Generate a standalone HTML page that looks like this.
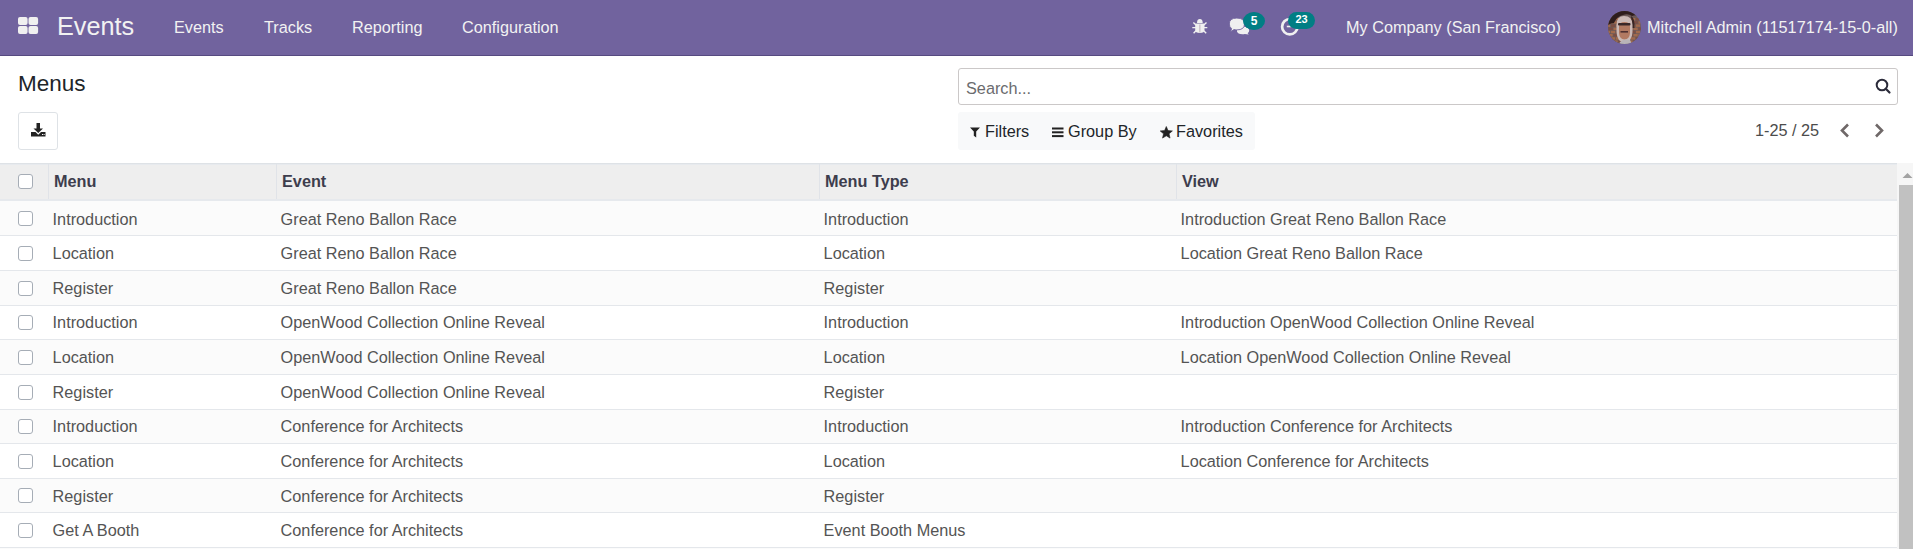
<!DOCTYPE html>
<html><head><meta charset="utf-8">
<style>
*{box-sizing:border-box;margin:0;padding:0}
html,body{width:1913px;height:549px;overflow:hidden;background:#fff;font-family:"Liberation Sans",sans-serif;}
.abs{position:absolute;white-space:nowrap}
#nav{position:absolute;left:0;top:0;width:1913px;height:56px;background:#71639e;border-bottom:1px solid #564a80}
.nt{position:absolute;color:#f2f2f2;font-size:16.25px;line-height:20px;top:17px;white-space:nowrap}
.brand{font-size:25.25px;line-height:30px;top:10.5px}
.badge{position:absolute;background:#017e84;color:#fff;font-weight:bold;font-size:11.5px;text-align:center;border-radius:9px}
.t{color:#4c4c4c;font-size:16.25px}
#sb{position:absolute;left:958px;top:68px;width:940px;height:37px;border:1px solid #cbc8c8;border-radius:3px}
#fb{position:absolute;left:958px;top:112px;width:297px;height:38px;background:#f8f9fa;border-radius:3px}
#dl{position:absolute;left:18px;top:112px;width:40px;height:38px;border:1px solid #dee2e6;border-radius:3px}
#tbl{position:absolute;left:0;top:163px;width:1897px}
.hdr{position:relative;height:38px;background:#eeeeee;border-top:1px solid #dee2e6;border-bottom:2px solid #e6e9ed;box-shadow:inset 0 1px 0 #e7eaee}
.r{position:absolute;left:0;width:1897px;border-bottom:1px solid #e4e7eb}
.r.odd{background:#fbfbfb}
.c{position:absolute;white-space:nowrap;color:#545454;font-size:16.25px;line-height:20px}
.cell{position:absolute;top:0;height:100%;display:flex;align-items:center;padding-top:3px;white-space:nowrap;color:#4c4c4c;font-size:16.25px}
.hdr .cell{font-weight:bold;color:#3d3d4d;padding-top:0;padding-bottom:0;margin-left:1px}
.hdr .div{position:absolute;top:0;bottom:0;width:1px;background:#e0e3e8}
.cb{position:absolute;left:18px;width:15px;height:15px;border:1px solid #a6adb6;border-radius:3px;background:#fff}
#scr{position:absolute;left:1897px;top:163px;width:16px;height:386px;background:#f6f6f6}
#thumb{position:absolute;left:1899px;top:185px;width:14px;height:364px;background:#c1c1c1}
</style></head>
<body>
<div id="nav">
  <svg class="abs" style="left:18px;top:17px" width="21" height="18" viewBox="0 0 21 18">
    <rect x="0" y="0" width="9.6" height="8.1" rx="2" fill="#f0f0f0"/>
    <rect x="10.5" y="0" width="9.6" height="8.1" rx="2" fill="#f0f0f0"/>
    <rect x="0" y="9" width="9.6" height="8.1" rx="2" fill="#f0f0f0"/>
    <rect x="10.5" y="9" width="9.6" height="8.1" rx="2" fill="#f0f0f0"/>
  </svg>
  <div class="nt brand" style="left:57px">Events</div>
  <div class="nt" style="left:174px">Events</div>
  <div class="nt" style="left:264px">Tracks</div>
  <div class="nt" style="left:352px">Reporting</div>
  <div class="nt" style="left:462px">Configuration</div>

  <!-- bug -->
  <svg class="abs" style="left:1188px;top:15px" width="24" height="23" viewBox="0 0 24 23">
    <path d="M9 8.1 Q9 4.1 11.85 4.1 Q14.7 4.1 14.7 8.1 Z" fill="#f0f0f0"/>
    <path d="M7.2 8.7 H16.5 V14.8 Q16.5 18 11.85 18 Q7.2 18 7.2 14.8 Z" fill="#f0f0f0"/>
    <path d="M5.4 7.4 L8 10 M18.5 7.4 L15.8 10 M4.3 12.6 H8 M19.3 12.6 H15.7 M5.6 18.3 L8.2 15.6 M18.2 18.3 L15.5 15.6" stroke="#f0f0f0" stroke-width="1.4"/>
    <rect x="7.2" y="8.1" width="9.3" height="0.7" fill="#b8b4c8"/>
    <rect x="11.5" y="9.5" width="0.8" height="8" fill="#b09cb0"/>
  </svg>
  <!-- comments -->
  <svg class="abs" style="left:1225px;top:8px" width="26" height="30" viewBox="0 0 26 30">
    <path d="M12 21 Q13 18.5 18 18.5 Q24.2 19 24.2 22.5 Q24.2 24.3 22.6 25.2 L23.8 26.6 L19.8 25.9 Q18.9 26.2 17.5 26.2 Q12.5 26 12 23.5 Z" fill="#f0f0f0"/>
    <path d="M4.3 16 Q4.3 10.1 11.8 10.1 Q19.5 10.1 19.5 16 Q19.5 21.9 11.8 21.9 Q10.3 21.9 9 21.6 L5.6 23.8 L6.6 20.6 Q4.3 18.9 4.3 16 Z" fill="#f0f0f0" stroke="#71639e" stroke-width="0.9"/>
  </svg>
  <div class="badge" style="left:1243px;top:11.5px;width:22px;height:18.5px;line-height:19.5px;font-size:12px;border-radius:50%">5</div>
  <!-- clock -->
  <svg class="abs" style="left:1279.6px;top:15.7px" width="20" height="20" viewBox="0 0 20 20">
    <circle cx="9.8" cy="10.7" r="7.7" fill="none" stroke="#f0f0f0" stroke-width="2.7"/>
    <path d="M10.8 10.5 H6.8" fill="none" stroke="#f0f0f0" stroke-width="1.6"/>
  </svg>
  <div class="badge" style="left:1288px;top:11.7px;width:27px;height:17.3px;line-height:15px;font-size:11px">23</div>

  <div class="nt" style="left:1346px">My Company (San Francisco)</div>
  <div class="abs" style="left:1608px;top:10.5px;width:33px;height:33px;border-radius:50%;overflow:hidden"><svg style="display:block" width="33" height="33" viewBox="0 0 33 33">
    <g>
      <rect width="33" height="33" fill="#6c5a58"/>
      <rect x="-2.0" y="7.0" width="4.2" height="2.5" fill="#7d4e42"/><rect x="3.0" y="7.0" width="4.2" height="2.5" fill="#a26a4c"/><rect x="8.0" y="7.0" width="4.2" height="2.5" fill="#a26a4c"/><rect x="13.0" y="7.0" width="4.2" height="2.5" fill="#7d4e42"/><rect x="18.0" y="7.0" width="4.2" height="2.5" fill="#a26a4c"/><rect x="23.0" y="7.0" width="4.2" height="2.5" fill="#a26a4c"/><rect x="28.0" y="7.0" width="4.2" height="2.5" fill="#7d4e42"/><rect x="0.5" y="10.2" width="4.2" height="2.5" fill="#a26a4c"/><rect x="5.5" y="10.2" width="4.2" height="2.5" fill="#a26a4c"/><rect x="10.5" y="10.2" width="4.2" height="2.5" fill="#7d4e42"/><rect x="15.5" y="10.2" width="4.2" height="2.5" fill="#a26a4c"/><rect x="20.5" y="10.2" width="4.2" height="2.5" fill="#a26a4c"/><rect x="25.5" y="10.2" width="4.2" height="2.5" fill="#7d4e42"/><rect x="30.5" y="10.2" width="4.2" height="2.5" fill="#a26a4c"/><rect x="-2.0" y="13.4" width="4.2" height="2.5" fill="#a26a4c"/><rect x="3.0" y="13.4" width="4.2" height="2.5" fill="#7d4e42"/><rect x="8.0" y="13.4" width="4.2" height="2.5" fill="#a26a4c"/><rect x="13.0" y="13.4" width="4.2" height="2.5" fill="#a26a4c"/><rect x="18.0" y="13.4" width="4.2" height="2.5" fill="#7d4e42"/><rect x="23.0" y="13.4" width="4.2" height="2.5" fill="#a26a4c"/><rect x="28.0" y="13.4" width="4.2" height="2.5" fill="#a26a4c"/><rect x="0.5" y="16.6" width="4.2" height="2.5" fill="#7d4e42"/><rect x="5.5" y="16.6" width="4.2" height="2.5" fill="#a26a4c"/><rect x="10.5" y="16.6" width="4.2" height="2.5" fill="#a26a4c"/><rect x="15.5" y="16.6" width="4.2" height="2.5" fill="#7d4e42"/><rect x="20.5" y="16.6" width="4.2" height="2.5" fill="#a26a4c"/><rect x="25.5" y="16.6" width="4.2" height="2.5" fill="#a26a4c"/><rect x="30.5" y="16.6" width="4.2" height="2.5" fill="#7d4e42"/><rect x="-2.0" y="19.8" width="4.2" height="2.5" fill="#a26a4c"/><rect x="3.0" y="19.8" width="4.2" height="2.5" fill="#a26a4c"/><rect x="8.0" y="19.8" width="4.2" height="2.5" fill="#7d4e42"/><rect x="13.0" y="19.8" width="4.2" height="2.5" fill="#a26a4c"/><rect x="18.0" y="19.8" width="4.2" height="2.5" fill="#a26a4c"/><rect x="23.0" y="19.8" width="4.2" height="2.5" fill="#7d4e42"/><rect x="28.0" y="19.8" width="4.2" height="2.5" fill="#a26a4c"/><rect x="0.5" y="23.0" width="4.2" height="2.5" fill="#a26a4c"/><rect x="5.5" y="23.0" width="4.2" height="2.5" fill="#7d4e42"/><rect x="10.5" y="23.0" width="4.2" height="2.5" fill="#a26a4c"/><rect x="15.5" y="23.0" width="4.2" height="2.5" fill="#a26a4c"/><rect x="20.5" y="23.0" width="4.2" height="2.5" fill="#7d4e42"/><rect x="25.5" y="23.0" width="4.2" height="2.5" fill="#a26a4c"/><rect x="30.5" y="23.0" width="4.2" height="2.5" fill="#a26a4c"/><rect x="-2.0" y="26.2" width="4.2" height="2.5" fill="#7d4e42"/><rect x="3.0" y="26.2" width="4.2" height="2.5" fill="#a26a4c"/><rect x="8.0" y="26.2" width="4.2" height="2.5" fill="#a26a4c"/><rect x="13.0" y="26.2" width="4.2" height="2.5" fill="#7d4e42"/><rect x="18.0" y="26.2" width="4.2" height="2.5" fill="#a26a4c"/><rect x="23.0" y="26.2" width="4.2" height="2.5" fill="#a26a4c"/><rect x="28.0" y="26.2" width="4.2" height="2.5" fill="#7d4e42"/><rect x="0.5" y="29.4" width="4.2" height="2.5" fill="#a26a4c"/><rect x="5.5" y="29.4" width="4.2" height="2.5" fill="#a26a4c"/><rect x="10.5" y="29.4" width="4.2" height="2.5" fill="#7d4e42"/><rect x="15.5" y="29.4" width="4.2" height="2.5" fill="#a26a4c"/><rect x="20.5" y="29.4" width="4.2" height="2.5" fill="#a26a4c"/><rect x="25.5" y="29.4" width="4.2" height="2.5" fill="#7d4e42"/><rect x="30.5" y="29.4" width="4.2" height="2.5" fill="#a26a4c"/>
      <path d="M0 0 H33 V6 Q28 3 24 5 Q20 2 15 4 Q9 5 6 12 Q3 12 0 14 Z" fill="#2e1d1c"/>
      <path d="M23 5 Q27 7 26.5 17 L24 17 Z" fill="#3a2624"/>
      <path d="M0 22 Q4 30 12 33 H0 Z" fill="#352625"/>
      <path d="M8.5 14 Q8.5 5 16 5 Q24.5 5 24.5 14 V21 Q24 31 16.5 31.5 Q9 31 8.5 21 Z" fill="#cbbab6"/>
      <path d="M11 16 Q11 11 16.5 11 Q22 11 22 16 V22 Q21.5 28 16.5 28.5 Q11.5 28 11 22 Z" fill="#b27a62"/>
      <rect x="10" y="12" width="12.5" height="2.4" rx="1" fill="#3a2828"/>
      <rect x="12.5" y="20" width="7.5" height="1.6" fill="#4e3030"/>
      <path d="M12 31 Q16 27.5 22 29 L24 33 H11 Z" fill="#b8b4b8"/>
    </g>
  </svg></div>
  <div class="nt" style="left:1647px">Mitchell Admin (11517174-15-0-all)</div>
</div>

<!-- control panel -->
<div class="abs" style="left:18px;top:70px;font-size:22.5px;line-height:28px;color:#212529">Menus</div>
<div id="dl">
  <svg class="abs" style="left:11px;top:9px" width="17" height="17" viewBox="0 0 17 17">
    <path d="M6.5 1 H10 V6.5 H13 L8.25 11 L3.5 6.5 H6.5 Z" fill="#222"/>
    <path d="M1 10 H5.5 L8.25 12.8 L11 10 H15.5 V14.5 H1 Z" fill="#222"/>
    <rect x="12" y="12" width="1" height="1" fill="#fff"/><rect x="13.6" y="12" width="1" height="1" fill="#fff"/>
  </svg>
</div>

<div id="sb">
  <div class="abs t" style="left:7px;top:9px;color:#6b6b6e;line-height:20px">Search...</div>
  <svg class="abs" style="left:916px;top:9px" width="17" height="17" viewBox="0 0 17 17">
    <circle cx="7" cy="7" r="5.3" fill="none" stroke="#2b2b3a" stroke-width="2"/>
    <path d="M10.8 10.8 L14.5 14.5" stroke="#2b2b3a" stroke-width="2.2" stroke-linecap="round"/>
  </svg>
</div>

<div id="fb">
  <svg class="abs" style="left:12px;top:15px" width="11" height="11" viewBox="0 0 11 11">
    <path d="M0 0.5 H10 L6.2 4.6 V10.5 L3.8 8.8 V4.6 Z" fill="#222"/>
  </svg>
  <div class="abs t" style="left:27px;top:9px;line-height:20px;color:#212529">Filters</div>
  <svg class="abs" style="left:94px;top:15px" width="12" height="11" viewBox="0 0 12 11">
    <rect x="0" y="0.5" width="11.5" height="2" fill="#222"/>
    <rect x="0" y="4.3" width="11.5" height="2" fill="#222"/>
    <rect x="0" y="8.1" width="11.5" height="2" fill="#222"/>
  </svg>
  <div class="abs t" style="left:110px;top:9px;line-height:20px;color:#212529">Group By</div>
  <svg class="abs" style="left:201.5px;top:13.8px" width="13" height="14" viewBox="0 0 13 14"><path d="M6.30 0.50 L8.00 4.55 L12.39 4.92 L9.06 7.80 L10.06 12.08 L6.30 9.80 L2.54 12.08 L3.54 7.80 L0.21 4.92 L4.60 4.55 Z" fill="#222" stroke="#222" stroke-width="0.6" stroke-linejoin="round"/></svg>
  <div class="abs t" style="left:218px;top:9px;line-height:20px;color:#212529">Favorites</div>
</div>

<div class="abs t" style="left:1755px;top:120px;line-height:20px;color:#4c4c4c">1-25 / 25</div>
<svg class="abs" style="left:1838px;top:122px" width="13" height="17" viewBox="0 0 13 17">
  <path d="M10 2.5 L4 8.5 L10 14.5" fill="none" stroke="#6f6868" stroke-width="2.6"/>
</svg>
<svg class="abs" style="left:1873px;top:122px" width="13" height="17" viewBox="0 0 13 17">
  <path d="M3 2.5 L9 8.5 L3 14.5" fill="none" stroke="#6f6868" stroke-width="2.6"/>
</svg>

<div id="tbl">
  <div class="hdr">
    <div class="cb" style="top:10px"></div>
    <div class="div" style="left:48px"></div>
    <div class="div" style="left:276px"></div>
    <div class="div" style="left:819px"></div>
    <div class="div" style="left:1176px"></div>
    <div class="cell" style="left:53px">Menu</div>
    <div class="cell" style="left:281px">Event</div>
    <div class="cell" style="left:824px">Menu Type</div>
    <div class="cell" style="left:1181px">View</div>
  </div>
</div>
<div class="r odd" style="top:201px;height:35px"><div class="cb" style="top:10px"></div><div class="c" style="left:52.6px;top:8px">Introduction</div><div class="c" style="left:280.6px;top:8px">Great Reno Ballon Race</div><div class="c" style="left:823.6px;top:8px">Introduction</div><div class="c" style="left:1180.6px;top:8px">Introduction Great Reno Ballon Race</div></div>
<div class="r" style="top:236px;height:35px"><div class="cb" style="top:10px"></div><div class="c" style="left:52.6px;top:7px">Location</div><div class="c" style="left:280.6px;top:7px">Great Reno Ballon Race</div><div class="c" style="left:823.6px;top:7px">Location</div><div class="c" style="left:1180.6px;top:7px">Location Great Reno Ballon Race</div></div>
<div class="r odd" style="top:271px;height:35px"><div class="cb" style="top:10px"></div><div class="c" style="left:52.6px;top:7px">Register</div><div class="c" style="left:280.6px;top:7px">Great Reno Ballon Race</div><div class="c" style="left:823.6px;top:7px">Register</div></div>
<div class="r" style="top:306px;height:34px"><div class="cb" style="top:9px"></div><div class="c" style="left:52.6px;top:6px">Introduction</div><div class="c" style="left:280.6px;top:6px">OpenWood Collection Online Reveal</div><div class="c" style="left:823.6px;top:6px">Introduction</div><div class="c" style="left:1180.6px;top:6px">Introduction OpenWood Collection Online Reveal</div></div>
<div class="r odd" style="top:340px;height:35px"><div class="cb" style="top:10px"></div><div class="c" style="left:52.6px;top:7px">Location</div><div class="c" style="left:280.6px;top:7px">OpenWood Collection Online Reveal</div><div class="c" style="left:823.6px;top:7px">Location</div><div class="c" style="left:1180.6px;top:7px">Location OpenWood Collection Online Reveal</div></div>
<div class="r" style="top:375px;height:35px"><div class="cb" style="top:10px"></div><div class="c" style="left:52.6px;top:7px">Register</div><div class="c" style="left:280.6px;top:7px">OpenWood Collection Online Reveal</div><div class="c" style="left:823.6px;top:7px">Register</div></div>
<div class="r odd" style="top:410px;height:34px"><div class="cb" style="top:9px"></div><div class="c" style="left:52.6px;top:6px">Introduction</div><div class="c" style="left:280.6px;top:6px">Conference for Architects</div><div class="c" style="left:823.6px;top:6px">Introduction</div><div class="c" style="left:1180.6px;top:6px">Introduction Conference for Architects</div></div>
<div class="r" style="top:444px;height:35px"><div class="cb" style="top:10px"></div><div class="c" style="left:52.6px;top:7px">Location</div><div class="c" style="left:280.6px;top:7px">Conference for Architects</div><div class="c" style="left:823.6px;top:7px">Location</div><div class="c" style="left:1180.6px;top:7px">Location Conference for Architects</div></div>
<div class="r odd" style="top:479px;height:34px"><div class="cb" style="top:9px"></div><div class="c" style="left:52.6px;top:7px">Register</div><div class="c" style="left:280.6px;top:7px">Conference for Architects</div><div class="c" style="left:823.6px;top:7px">Register</div></div>
<div class="r" style="top:513px;height:35px"><div class="cb" style="top:10px"></div><div class="c" style="left:52.6px;top:7px">Get A Booth</div><div class="c" style="left:280.6px;top:7px">Conference for Architects</div><div class="c" style="left:823.6px;top:7px">Event Booth Menus</div></div>
<div class="r odd" style="top:548px;height:10px;border:0"></div>

<div id="scr"></div>
<svg class="abs" style="left:1902px;top:172px" width="11" height="7" viewBox="0 0 11 7"><path d="M0.5 6 L5.5 1 L10.5 6 Z" fill="#a3a3a3"/></svg>
<div id="thumb"></div>
</body></html>
